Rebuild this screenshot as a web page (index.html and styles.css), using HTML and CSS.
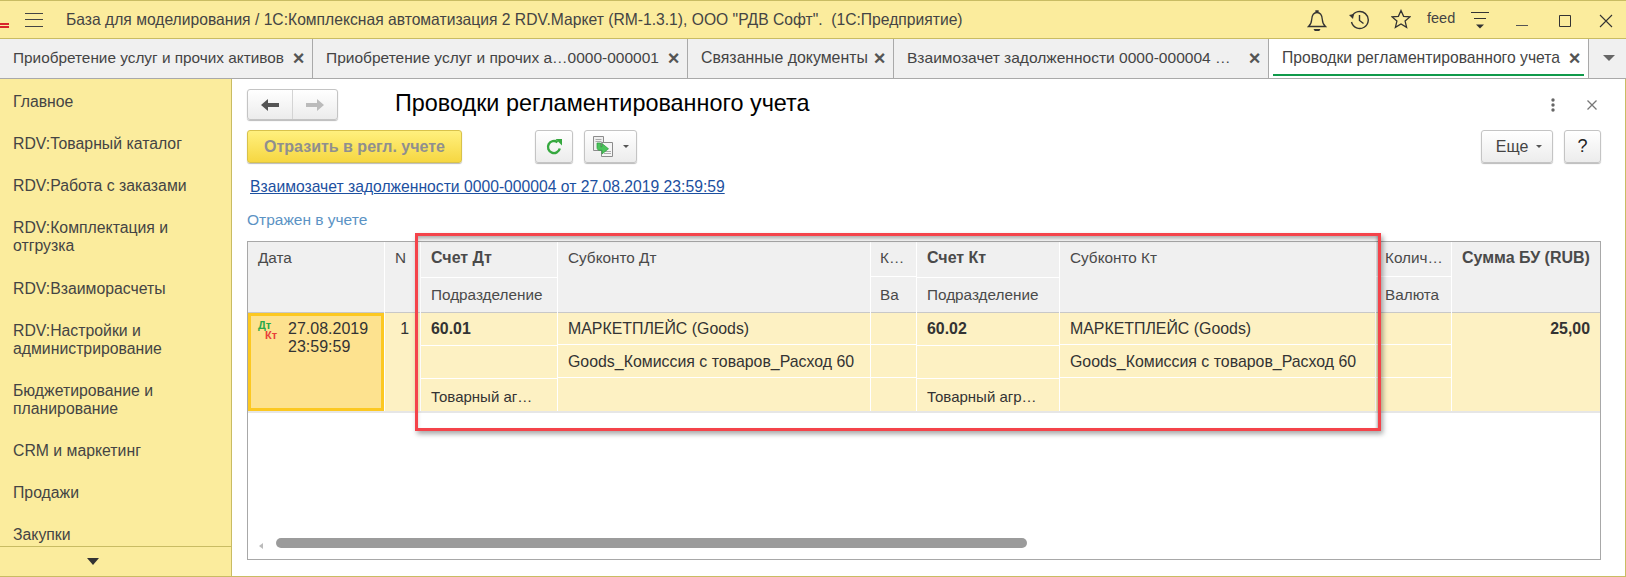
FILE: index.html
```html
<!DOCTYPE html>
<html lang="ru">
<head>
<meta charset="utf-8">
<title>Проводки регламентированного учета</title>
<link rel="stylesheet" href="styles.css">
</head>
<body>
<header class="titlebar">
  <span class="brand-mark"></span>
  <svg class="burger" width="18" height="14" viewBox="0 0 18 14"><path d="M0 .5h18M0 6.500h18M0 13.500h18" stroke="#444" fill="none"/></svg>
  <span class="app-title">База для моделирования / 1С:Комплексная автоматизация 2 RDV.Маркет (RM-1.3.1), ООО "РДВ Софт".  (1С:Предприятие)</span>
  <div class="sys-icons">
    <svg class="sys bell" width="20" height="22" viewBox="0 0 20 22"><path d="M1.500 16.500c2-1.800 3-3.500 3.200-7C5 5 7 2.500 10 2.500S15 5 15.300 9.500c.2 3.500 1.200 5.200 3.200 7z M9 2.500V1h2v1.500" fill="none" stroke="#333" stroke-width="1.300"/><path d="M6.500 19h7l-1.200 2H7.700z" fill="#333"/></svg>
    <svg class="sys hist" width="22" height="20" viewBox="0 0 22 20"><path d="M4 6.500A8.500 8.500 0 1 1 3.500 12" fill="none" stroke="#333" stroke-width="1.400"/><path d="M1 5l5-1-1 5z" fill="#333"/><path d="M11.500 5v5.500l4 3" fill="none" stroke="#333" stroke-width="1.400"/></svg>
    <svg class="sys star" width="20" height="20" viewBox="0 0 20 20"><path d="M10 1.500l2.600 5.800 6.300.6-4.800 4.200 1.500 6.200L10 15l-5.600 3.300 1.500-6.200L1.100 7.900l6.300-.6z" fill="none" stroke="#333" stroke-width="1.300"/></svg>
    <span class="user">feed</span>
    <svg class="sys filt" width="18" height="18" viewBox="0 0 18 18"><path d="M0 .5h18M3 6.500h12" stroke="#333" fill="none"/><path d="M5 12.500h8l-4 4z" fill="#333"/></svg>
    <svg class="sys mini" width="12" height="12" viewBox="0 0 12 12"><path d="M0 11.500h12" stroke="#555" fill="none"/></svg>
    <svg class="sys maxi" width="12" height="12" viewBox="0 0 12 12"><path d="M.5.500h11v11H.5z" stroke="#333" fill="none"/></svg>
    <svg class="sys clos" width="14" height="14" viewBox="0 0 14 14"><path d="M1 1l12 12M13 1L1 13" stroke="#333" fill="none" stroke-width="1.100"/></svg>
  </div>
</header>

<nav class="tabs">
  <div class="tab t1"><span class="tab-text">Приобретение услуг и прочих активов</span><span class="tab-x">×</span></div>
  <div class="tab t2"><span class="tab-text">Приобретение услуг и прочих а…0000-000001</span><span class="tab-x">×</span></div>
  <div class="tab t3"><span class="tab-text">Связанные документы</span><span class="tab-x">×</span></div>
  <div class="tab t4"><span class="tab-text">Взаимозачет задолженности 0000-000004 …</span><span class="tab-x">×</span></div>
  <div class="tab t5 active"><span class="tab-text">Проводки регламентированного учета</span><span class="tab-x">×</span></div>
  <div class="tab-more"><span class="tri"></span></div>
</nav>

<div class="body-row">
  <aside class="sidebar">
    <ul class="menu">
      <li>Главное</li>
      <li>RDV:Товарный каталог</li>
      <li>RDV:Работа с заказами</li>
      <li>RDV:Комплектация и отгрузка</li>
      <li>RDV:Взаиморасчеты</li>
      <li>RDV:Настройки и администрирование</li>
      <li>Бюджетирование и планирование</li>
      <li>CRM и маркетинг</li>
      <li>Продажи</li>
      <li>Закупки</li>
    </ul>
    <div class="menu-more"><span class="tri dark"></span></div>
  </aside>

  <main class="content">
    <div class="form-head">
      <div class="nav-group">
        <button class="nav-btn"><svg width="18" height="14" viewBox="0 0 18 14"><path d="M0 7l7-6v4h11v4H7v4z" fill="#555"/></svg></button>
        <button class="nav-btn"><svg width="18" height="14" viewBox="0 0 18 14"><path d="M18 7l-7-6v4H0v4h11v4z" fill="#bbb"/></svg></button>
      </div>
      <h1 class="form-title">Проводки регламентированного учета</h1>
      <div class="form-tools">
        <svg width="4" height="14" viewBox="0 0 4 14"><circle cx="2" cy="2" r="1.700" fill="#666"/><circle cx="2" cy="7" r="1.700" fill="#666"/><circle cx="2" cy="12" r="1.700" fill="#666"/></svg>
        <svg width="10" height="10" viewBox="0 0 10 10"><path d="M.5.500l9 9M9.500.500l-9 9" stroke="#777" stroke-width="1.300" fill="none"/></svg>
      </div>
    </div>

    <div class="commands">
      <button class="btn primary">Отразить в регл. учете</button>
      <button class="btn icon refresh"><svg width="18" height="18" viewBox="0 0 18 18"><path d="M14.800 10.500A6 6 0 1 1 12.500 4.200" fill="none" stroke="#36a83f" stroke-width="2.400"/><path d="M10.500 1h6.500v6.500z" fill="#36a83f"/></svg></button>
      <button class="btn icon docs"><svg width="21" height="21" viewBox="0 0 21 21"><path d="M.5.500h10v14H.5z" fill="#efefef" stroke="#8c8c8c"/><path d="M2.500 3.500h6M2.500 5.500h6" stroke="#aaa"/><path d="M8.500 6.500h11v14h-11z" fill="#f6f6f6" stroke="#8c8c8c"/><path d="M11 15.500h7M11 17.500h7" stroke="#aaa"/><path d="M4 7v4.500c0 1.800 1 2.800 2.800 2.800H9V18l6.500-5.200L9 7.500v3.300H7.500V7z" fill="#4cc45c" stroke="#2b9a3c" stroke-width=".7"/></svg><span class="mini-tri"></span></button>
      <button class="btn more">Еще<span class="mini-tri"></span></button>
      <button class="btn help">?</button>
    </div>

    <a class="doc-link" href="#">Взаимозачет задолженности 0000-000004 от 27.08.2019 23:59:59</a>
    <div class="status">Отражен в учете</div>

    <section class="grid">
      <div class="grid-cols">
        <div class="col c-date">
          <div class="hd full">Дата</div>
          <div class="date-cell">
            <span class="dk"><span class="dt">Дт</span><span class="kt">Кт</span></span>
            <span class="date-val">27.08.2019<br>23:59:59</span>
          </div>
        </div>
        <div class="col c-n">
          <div class="hd full">N</div>
          <div class="dc span num right">1</div>
        </div>
        <div class="col c-sd acct">
          <div class="hd r1 b">Счет Дт</div>
          <div class="hd r2">Подразделение</div>
          <div class="dc d1 b">60.01</div>
          <div class="dc d2"></div>
          <div class="dc d3">Товарный аг…</div>
        </div>
        <div class="col c-subd">
          <div class="hd full">Субконто Дт</div>
          <div class="dc e1">МАРКЕТПЛЕЙС (Goods)</div>
          <div class="dc e2">Goods_Комиссия с товаров_Расход 60</div>
          <div class="dc e3"></div>
        </div>
        <div class="col c-k">
          <div class="hd q1">К…</div>
          <div class="hd q2">Ва</div>
          <div class="dc e1"></div>
          <div class="dc e2"></div>
          <div class="dc e3"></div>
        </div>
        <div class="col c-sk acct">
          <div class="hd r1 b">Счет Кт</div>
          <div class="hd r2">Подразделение</div>
          <div class="dc d1 b">60.02</div>
          <div class="dc d2"></div>
          <div class="dc d3">Товарный агр…</div>
        </div>
        <div class="col c-subk">
          <div class="hd full">Субконто Кт</div>
          <div class="dc e1">МАРКЕТПЛЕЙС (Goods)</div>
          <div class="dc e2">Goods_Комиссия с товаров_Расход 60</div>
          <div class="dc e3"></div>
        </div>
        <div class="col c-q">
          <div class="hd q1">Колич…</div>
          <div class="hd q2">Валюта</div>
          <div class="dc e1"></div>
          <div class="dc e2"></div>
          <div class="dc e3"></div>
        </div>
        <div class="col c-sum">
          <div class="hd full b">Сумма БУ (RUB)</div>
          <div class="dc span b right">25,00</div>
        </div>
      </div>
      <div class="scroll">
        <span class="scroll-arrow"></span>
        <span class="scroll-thumb"></span>
      </div>
    </section>

    <div class="callout"></div>
  </main>
</div>
</body>
</html>
```
FILE: styles.css
```css
* { box-sizing: border-box; }
html, body { margin: 0; height: 100%; }
body {
  width: 1626px; height: 577px; overflow: hidden;
  display: flex; flex-direction: column;
  font-family: "Liberation Sans", Arial, sans-serif;
  font-size: 15px; color: #333; background: #fff;
  border-bottom: 1px solid #c9bc63;
}
button { font-family: inherit; }

.titlebar {
  height: 39px; flex: none; display: flex; align-items: center; position: relative;
  background: #fbec9d; border-top: 1px solid #c9bc63; border-bottom: 1px solid #c9bc63;
}
.brand-mark {
  width: 9px; height: 5px; margin-top: 11px;
  border-top: 2px solid #d8262c; border-bottom: 2px solid #d8262c; flex: none;
}
.burger { margin-left: 16px; flex: none; }
.app-title { margin-left: 23px; color: #444; white-space: pre; font-size: 15.67px; }
.sys-icons { position: absolute; inset: 0; }
.sys { position: absolute; }
.bell { left: 1307px; top: 9px; }
.hist { left: 1348px; top: 9px; }
.star { left: 1391px; top: 8px; }
.filt { left: 1471px; top: 11px; }
.mini { left: 1516px; top: 13px; }
.maxi { left: 1559px; top: 14px; }
.clos { left: 1599px; top: 13px; }
.user { position: absolute; left: 1427px; top: 9px; color: #444; font-size: 14.500px; }

.tabs {
  height: 40px; flex: none; display: flex; background: #f0f0f0;
  border-bottom: 1px solid #a9a9a9;
}
.tab {
  display: flex; align-items: center; padding: 0 7px 2px 13px; position: relative;
  border-right: 1px solid #a9a9a9; color: #444; white-space: nowrap;
}
.t1 { width: 313px; font-size: 15.35px; }
.t2 { width: 375px; font-size: 15.5px; }
.t3 { width: 206px; font-size: 15.9px; }
.t4 { width: 375px; font-size: 15.55px; }
.t5 { width: 320px; font-size: 15.7px; }
.tab-text { flex: 1; overflow: hidden; }
.tab-x { font-size: 20px; font-weight: bold; color: #555; line-height: 1; width: 13px; text-align: center; }
.tab.active { background: #fff; }
.tab.active::after {
  content: ""; position: absolute; left: 4px; right: 4px; bottom: 2px; height: 2px; background: #109a4b;
}
.tab-more { flex: 1; display: flex; align-items: center; justify-content: center; padding-bottom: 2px; }
.tri { width: 0; height: 0; border: 6px solid transparent; border-top: 6px solid #666; border-bottom: 0; margin-left: 2px; }
.tri.dark { border-top-color: #333; border-width: 7px 6px 0; margin: 0; }

.body-row { flex: 1; display: flex; min-height: 0; }
.sidebar {
  width: 232px; flex: none; background: #fbec9d; border-right: 1px solid #c9bc63;
  display: flex; flex-direction: column; overflow: hidden;
}
.menu { list-style: none; margin: 0; padding: 2px 0 0; flex: 1; overflow: hidden; font-size: 15.8px; }
.menu li { padding: 12px 30px 12.150px 13px; line-height: 18px; color: #444; }
.menu-more {
  height: 30px; flex: none; border-top: 1px solid #c9bc63;
  display: flex; align-items: center; padding-left: 87px;
}

.content {
  flex: 1; min-width: 0; padding: 10px 24px 16px 15px; display: flex; flex-direction: column;
  position: relative; border-right: 1px solid #c9bc63;
}
.form-head { height: 31px; flex: none; display: flex; align-items: center; }
.nav-group {
  display: flex; width: 91px; height: 31px; border: 1px solid #c4c4c4; border-radius: 3px;
  background: linear-gradient(#fff, #ececec); box-shadow: 0 1px 1px #bbb;
}
.nav-btn {
  flex: 1; border: 0; background: none; padding: 0; display: flex; align-items: center; justify-content: center;
}
.nav-btn + .nav-btn { border-left: 1px solid #d4d4d4; }
.form-title { margin: -2px 0 0 57px; font-size: 23.4px; font-weight: normal; color: #000; white-space: nowrap; }
.form-tools { margin-left: auto; margin-right: 4px; display: flex; align-items: center; gap: 32px; }

.commands { display: flex; margin-top: 10px; height: 33px; flex: none; }
.btn {
  border: 1px solid #c4c4c4; border-radius: 3px; background: linear-gradient(#fff, #ececec);
  box-shadow: 0 1px 1px #bbb; padding: 0; display: flex; align-items: center; justify-content: center;
  font-size: 16px; color: #444;
}
.primary {
  width: 215px; background: linear-gradient(#fff07e, #f6d742); border-color: #d8c24b;
  color: #8f8f8f; font-weight: bold;
}
.refresh { width: 38px; margin-left: 73px; }
.docs { width: 53px; margin-left: 11px; gap: 9px; }
.more { width: 72px; margin-left: auto; gap: 8px; padding-left: 4px; font-size: 16px; }
.help { width: 37px; margin-left: 11px; font-size: 18px; color: #222; }
.mini-tri { width: 0; height: 0; border: 3px solid transparent; border-top: 3px solid #555; border-bottom: 0; }

.doc-link {
  margin: 15px 0 0 3px; line-height: 18px; color: #1c50a0; font-size: 15.7px; flex: none;
}
.status { margin-top: 15px; line-height: 18px; color: #5b93c4; font-size: 15.500px; flex: none; }

.grid {
  margin-top: 12px; flex: 1; min-height: 0; border: 1px solid #a8a8a8; position: relative;
  display: flex; flex-direction: column;
}
.grid-cols {
  display: flex; gap: 1px; background: #fff; height: 171px; flex: none;
  border-bottom: 2px solid #e6e6e6;
}
.col { display: flex; flex-direction: column; flex: none; }
.c-date { width: 136px; }
.c-n { width: 35px; }
.c-sd { width: 136px; }
.c-subd { width: 312px; }
.c-k { width: 45px; }
.c-sk { width: 142px; }
.c-subk { width: 315px; }
.c-q { width: 75px; }
.c-sum { flex: 1; }

.hd {
  background: #f0f0f0; color: #4a4a4a; padding: 7px 9px 0 10px; line-height: 18px; font-size: 15.300px;
  white-space: nowrap; overflow: hidden;
}
.hd.full { height: 71px; border-bottom: 1px solid #c8c8c8; }
.r1 { height: 35px; }
.r2 { height: 36px; border-top: 1px solid #fff; border-bottom: 1px solid #c8c8c8; padding-top: 8px; }
.q1 { height: 34px; padding-left: 9px; }
.q2 { height: 37px; border-top: 1px solid #fff; border-bottom: 1px solid #c8c8c8; padding-top: 9px; padding-left: 9px; }
.hd.b { font-size: 16px; font-weight: bold; padding-left: 10px; }

.dc { background: #fdf1c3; padding: 7px 9px 0 10px; line-height: 18px; color: #333; white-space: nowrap; font-size: 15.900px; border-bottom: 1px solid #fff; }
.dc.b { font-weight: bold; }
.d1 { height: 33px; }
.d2 { height: 33px; }
.d3 { height: 32px; border-bottom: 0; font-size: 15px; padding-top: 9px; }
.e1 { height: 32px; }
.e2 { height: 33px; padding-top: 8px; }
.e3 { height: 33px; border-bottom: 0; }
.dc.span { flex: 1; border-bottom: 0; }
.right { text-align: right; }
.num { padding-right: 11px; }
.c-sum .dc { padding-right: 10px; }

.date-cell {
  flex: 1; background: #fde28f; border: 3px solid #fcc821; display: flex; padding: 4px 0 0 7px;
  line-height: 18px;
}
.dk { display: flex; flex-direction: column; width: 30px; font-size: 11px; font-weight: bold; line-height: 10px; padding-top: 0; }
.dt { color: #2aa84a; }
.kt { color: #e8403a; margin-left: 7px; }
.date-val { font-size: 16px; color: #333; }

.scroll { flex: 1; position: relative; }
.scroll-arrow {
  position: absolute; left: 11px; top: 130px; width: 0; height: 0;
  border: 3px solid transparent; border-right: 4px solid #bbb; border-left: 0;
}
.scroll-thumb {
  position: absolute; left: 28px; top: 125px; width: 751px; height: 10px; border-radius: 5px; background: #9b9b9b;
}

.callout {
  position: absolute; left: 183px; top: 154px; width: 966px; height: 198px;
  border: 3px solid #f4434a; pointer-events: none;
  box-shadow: 2px 3px 5px rgba(0,0,0,.35), inset 0 4px 4px -1px rgba(0,0,0,.3), inset -3px 0 3px -2px rgba(0,0,0,.25);
}
```
